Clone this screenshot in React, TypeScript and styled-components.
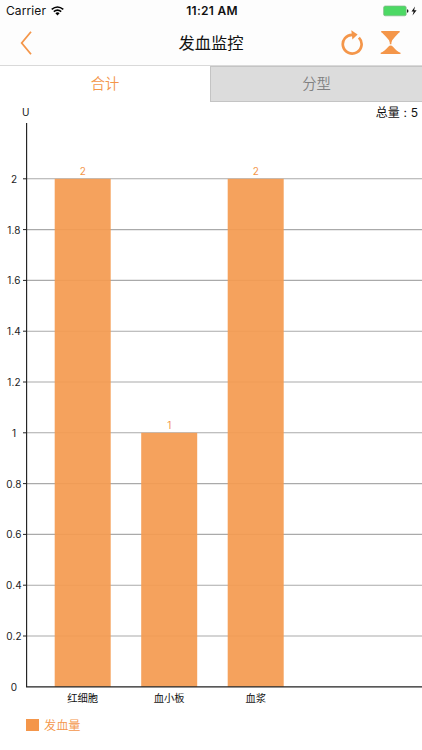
import React from "react";
import styled, { createGlobalStyle } from "styled-components";

const ORANGE = "#f4964a";
const FONT = 'Inter, "Noto Sans CJK SC", sans-serif';

const GlobalStyle = createGlobalStyle`
  body { margin: 0; background: #fff; }
  * { box-sizing: border-box; }
`;

const Screen = styled.main`
  display: flex;
  flex-direction: column;
  width: 422px;
  height: 750px;
  overflow: hidden;
  background: #fff;
  color: #111;
  font-family: ${FONT};
`;

const Header = styled.header`
  height: 66px;
  background: #fdfdfd;
  border-bottom: 1px solid #d9d9d9;
`;

const StatusBar = styled.div`
  display: grid;
  grid-template-columns: 1fr auto 1fr;
  align-items: center;
  height: 22px;
  padding: 0 4px 0 6px;
  font-size: 12px;
  line-height: 22px;
`;

const Carrier = styled.div`
  display: flex;
  align-items: center;
  gap: 5px;
  letter-spacing: 0.1px;
`;

const Clock = styled.div`
  font-weight: 600;
  font-size: 12px;
  letter-spacing: 0.28px;
`;

const Power = styled.div`
  display: flex;
  align-items: center;
  justify-content: flex-end;
`;

const NavBar = styled.nav`
  display: grid;
  grid-template-columns: 1fr auto 1fr;
  align-items: center;
  height: 42px;
  padding: 0 20px;
`;

const Title = styled.h1`
  margin: 0;
  font-size: 16.3px;
  font-weight: 400;
  line-height: 24px;
`;

const IconButton = styled.button`
  display: flex;
  padding: 0;
  border: 0;
  background: none;
`;

const Actions = styled.div`
  display: flex;
  justify-content: flex-end;
  gap: 16px;
`;

const Tabs = styled.div`
  display: grid;
  grid-template-columns: 210px 212px;
  height: 36px;
`;

const Tab = styled.button<{ $active?: boolean }>`
  padding: 0;
  border: ${(p) => (p.$active ? "0" : "1px solid #c4c4c4")};
  border-right: 0;
  background: ${(p) => (p.$active ? "#fff" : "#dcdcdc")};
  color: ${(p) => (p.$active ? ORANGE : "#808080")};
  font: 350 14.3px/34px ${FONT};
`;

const Summary = styled.div`
  display: flex;
  justify-content: space-between;
  height: 21px;
  padding: 0 4px 0 22px;
  font-size: 12px;
  line-height: 21px;
`;

const Unit = styled.span`
  font-size: 10px;
`;

const Total = styled.span`
  display: flex;
`;

const Colon = styled.span`
  width: 11px;
  text-align: center;
`;

const Chart = styled.svg`
  display: block;
  font-family: ${FONT};
  font-size: 10px;
`;

const Legend = styled.div`
  display: flex;
  align-items: center;
  gap: 5px;
  height: 20px;
  margin-top: 6px;
  padding-left: 26px;
  color: ${ORANGE};
  font-size: 12.2px;
  font-weight: 350;
`;

const Swatch = styled.span`
  width: 13px;
  height: 12px;
  background: ${ORANGE};
`;

const bars = [
  { label: "红细胞", value: 2 },
  { label: "血小板", value: 1 },
  { label: "血浆", value: 2 },
];
const ticks = ["0", "0.2", "0.4", "0.6", "0.8", "1", "1.2", "1.4", "1.6", "1.8", "2"];
const BASE = 563.8;
const yOf = (value: number) => BASE - value * 254;

function BarChart() {
  return (
    <Chart width="422" height="586" viewBox="0 0 422 586">
      {ticks.slice(1).map((t) => (
        <path key={t} d={`M27 ${yOf(+t)}H422`} stroke="#aaa" strokeWidth="1.1" />
      ))}
      {bars.map((b, i) => {
        const x = 54.7 + i * 86.5;
        return (
          <g key={b.label}>
            <rect x={x} y={yOf(b.value)} width="56" height={b.value * 254} fill="#f49b51" fillOpacity="0.93" />
            <text x={x + 28} y={yOf(b.value) - 3.5} textAnchor="middle" fill={ORANGE}>{b.value}</text>
            <text x={x + 28} y="579.3" textAnchor="middle" fill="#111" fontSize="10.3">{b.label}</text>
          </g>
        );
      })}
      {ticks.map((t) => (
        <g key={t}>
          {t !== "0" && <path d={`M23 ${yOf(+t)}H27`} stroke="#222" />}
          <text x="14" y={yOf(+t) + 4} textAnchor="middle" fill="#222" letterSpacing="0.15">{t}</text>
        </g>
      ))}
      <path d={`M26.6 0V${BASE}H422`} fill="none" stroke="#222" strokeWidth="1.15" />
    </Chart>
  );
}

export default function App() {
  return (
    <Screen>
      <GlobalStyle />
      <Header>
        <StatusBar>
          <Carrier>
            Carrier
            <svg width="13" height="11" viewBox="0 0 13 11" fill="none" stroke="#000" strokeWidth="1.6">
              <path d="M.7 3.4Q6.5-1.4 12.3 3.4M2.8 5.6Q6.5 2.5 10.2 5.6" />
              <path d="M4.4 7.2Q6.5 5.5 8.6 7.2L6.5 9.4Z" fill="#000" stroke="none" />
            </svg>
          </Carrier>
          <Clock>11:21 AM</Clock>
          <Power>
            <svg width="35" height="12" viewBox="0 0 35 12">
              <rect x=".6" y="1" width="22.6" height="9.8" rx="1.6" fill="#4cd964" stroke="#85b68b" strokeWidth=".7" />
              <path d="M24 4.2Q25.5 4.4 25.5 6T24 7.8Z" fill="#222" />
              <path d="M32 1.5L28.5 6.4H30.7L29.5 10.5L33.6 5.3H31.1Z" fill="#111" />
            </svg>
          </Power>
        </StatusBar>
        <NavBar>
          <IconButton aria-label="返回">
            <svg width="13" height="26" viewBox="0 0 13 26" fill="none" stroke={ORANGE} strokeWidth="1.8">
              <path d="M11 1.8L1.7 13L11 24.2" />
            </svg>
          </IconButton>
          <Title>发血监控</Title>
          <Actions>
            <IconButton aria-label="刷新">
              <svg width="24" height="26" viewBox="0 0 24 26">
                <path d="M18.9 7.6A9.4 9.4 0 1 1 12.5 4.8" fill="none" stroke={ORANGE} strokeWidth="2.7" />
                <path d="M11.3 .2L17.6 4.6L12.4 9.4Z" fill={ORANGE} />
              </svg>
            </IconButton>
            <IconButton aria-label="筛选时间">
              <svg width="22" height="26" viewBox="0 0 22 26" fill={ORANGE}>
                <path d="M1.2 1H19.7V2.2Q18 3 12.2 10.2L11.4 12.8V14.2H9.8V12.8L9 10.2Q3 3 1.2 2.2Z" />
                <path d="M.7 24V22.8Q4 21.7 8.3 16.8Q10.6 14.2 13 16.8Q17.1 21.7 20.5 22.8V24Z" />
              </svg>
            </IconButton>
          </Actions>
        </NavBar>
      </Header>
      <Tabs>
        <Tab $active>合计</Tab>
        <Tab>分型</Tab>
      </Tabs>
      <Summary>
        <Unit>U</Unit>
        <Total>总量<Colon>:</Colon>5</Total>
      </Summary>
      <BarChart />
      <Legend><Swatch />发血量</Legend>
    </Screen>
  );
}
